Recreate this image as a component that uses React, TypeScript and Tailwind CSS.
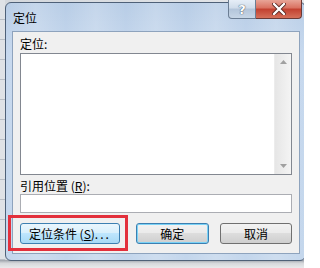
import React from "react";

const font = { fontFamily: '"Noto Sans CJK SC", "Noto Sans", sans-serif' };

function Btn({ label, variant }: { label: React.ReactNode; variant: "hover" | "default" | "normal" }) {
  const cls =
    variant === "hover"
      ? "border-[#3c7fb1] bg-[linear-gradient(#eaf6fd_0%,#d9f0fc_45%,#bee6fd_50%,#a7d9f5_100%)]"
      : variant === "default"
      ? "border-[#3c7fb1] shadow-[inset_0_0_0_1px_#7ad2f6] bg-[linear-gradient(#f2f2f2_0%,#ebebeb_45%,#dddddd_50%,#cfcfcf_100%)]"
      : "border-[#707070] bg-[linear-gradient(#f2f2f2_0%,#ebebeb_45%,#dddddd_50%,#cfcfcf_100%)]";
  return (
    <div className={`h-[21px] flex items-center justify-center rounded-[3px] border text-[12px] text-black ${cls}`}>
      {label}
    </div>
  );
}

export default function App() {
  return (
    <div
      className="relative w-[304px] h-[268px] overflow-hidden bg-[linear-gradient(90deg,#d3d7dc,#e6e8eb)]"
      style={font}
    >
      {/* sheet grid behind */}
      <div className="absolute left-0 top-0 w-[5px] h-full bg-[repeating-linear-gradient(#dfe2e6_0px,#dfe2e6_19px,#b9bec5_19px,#b9bec5_20px)]" />
      <div className="absolute left-0 bottom-0 w-full h-[8px] bg-[linear-gradient(#9aa0a8,#d6d8db_40%,#e9eaec)]" />

      {/* window */}
      <div className="relative ml-[5px] mt-[2px] w-[301px] h-[259px] rounded-[6px] border border-[#4f6178] bg-[linear-gradient(#b8cde6_0%,#c6d8ee_20%,#c3d6ec_100%)] pl-[6px] pr-[5px] pb-[6px] flex flex-col">
        <div className="absolute inset-0 rounded-[6px] bg-[repeating-linear-gradient(90deg,rgba(255,255,255,0)_0px,rgba(255,255,255,0.18)_30px,rgba(255,255,255,0)_60px)] pointer-events-none" />
        {/* title bar */}
        <div className="relative h-[28px] flex items-start shrink-0">
          <span className="mt-[6px] ml-[1px] text-[12px] text-black">定位</span>
          <div className="ml-auto -mt-[3px] -mr-[2px] flex">
            <div className="w-[28px] h-[19px] rounded-bl-[4px] border border-t-0 border-[#6b7d93] bg-[linear-gradient(#e6eef7_0%,#cfdcea_45%,#b3c5da_50%,#c7d6e6_100%)] flex items-center justify-center">
              <span className="text-[13px] font-bold text-white leading-none [text-shadow:0_0_1px_#3b4c60,0_0_1px_#3b4c60]" style={{ fontFamily: '"DejaVu Sans", sans-serif' }}>?</span>
            </div>
            <div className="w-[46px] h-[19px] rounded-br-[4px] border border-l-0 border-t-0 border-[#6b3a36] bg-[linear-gradient(#e8a597_0%,#d9705f_45%,#c2402f_50%,#d5705a_100%)] flex items-center justify-center">
              <svg width="14" height="12" viewBox="0 0 14 12">
                <path d="M2 1 L12 11 M12 1 L2 11" stroke="#5a2a24" strokeWidth="4" strokeLinecap="round" />
                <path d="M2 1 L12 11 M12 1 L2 11" stroke="#ffffff" strokeWidth="2.4" strokeLinecap="round" />
              </svg>
            </div>
          </div>
        </div>

        {/* client area */}
        <div className="relative flex-1 bg-[#f0f0f0] border border-[#8ea3bd] px-[7px] pt-[4px] flex flex-col">
          <div className="text-[12px] leading-[16px] text-black">定位:</div>
          <div className="mt-[1px] h-[122px] border border-[#828790] bg-white flex justify-end">
            <div className="w-[17px] h-full bg-[linear-gradient(90deg,#e6e6e6,#f4f4f4)] border-l border-[#ececec] flex flex-col items-center justify-between py-[6px]">
              <svg width="7" height="4" viewBox="0 0 7 4"><path d="M0 4 L3.5 0 L7 4 Z" fill="#a0a0a0" /></svg>
              <svg width="7" height="4" viewBox="0 0 7 4"><path d="M0 0 L3.5 4 L7 0 Z" fill="#a0a0a0" /></svg>
            </div>
          </div>
          <div className="mt-[3px] text-[12px] leading-[16px] text-black">
            引用位置 (<span className="underline">R</span>):
          </div>
          <div className="h-[19px] border border-[#abadb3] bg-white" />
          <div className="mt-[10px] flex items-center">
            <div className="w-[101px]">
              <Btn
                variant="hover"
                label={
                  <span>
                    定位条件 (<span className="underline">S</span>)<span className="tracking-[2px]">...</span>
                  </span>
                }
              />
            </div>
            <div className="w-[74px] ml-[16px]">
              <Btn variant="default" label="确定" />
            </div>
            <div className="w-[73px] ml-[11px]">
              <Btn variant="normal" label="取消" />
            </div>
          </div>
        </div>
      </div>

      {/* red annotation box */}
      <div className="absolute left-[8px] top-[215px] w-[120px] h-[36px] border-[3px] border-[#e3303c]" />
    </div>
  );
}
